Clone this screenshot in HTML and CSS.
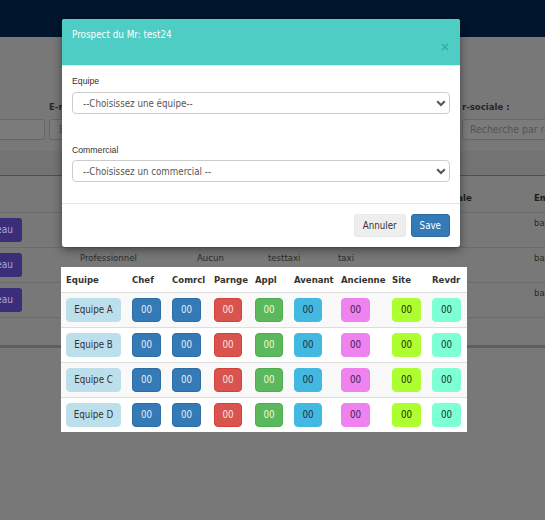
FILE: index.html
```html
<!DOCTYPE html>
<html lang="fr">
<head>
<meta charset="utf-8">
<title>Prospect</title>
<link rel="stylesheet" href="styles.css">
</head>
<body>
<div class="navbar"></div>
<main class="page">
  <div class="filters">
    <div class="filter f1"><div class="finput"></div></div>
    <div class="filter f2"><span class="flabel">E-mail :</span><div class="finput">E-mail</div></div>
    <div class="filter f3"><span class="flabel">r-sociale :</span><div class="finput">Recherche par r-sociale</div></div>
  </div>
  <div class="band"></div>
  <div class="bgtable">
    <div class="bgrow head">
      <span></span><span>Type</span><span>Statut</span><span>Nom</span><span>Prénom</span><span>Raison sociale</span><span>Email</span>
    </div>
    <div class="bgrow">
      <span class="btncell"><span class="pbtn">Tableau</span></span><span>Professionnel</span><span>Aucun</span><span>testtaxi</span><span>taxi</span><span></span><span>bac@test.fr</span>
    </div>
    <div class="bgrow">
      <span class="btncell"><span class="pbtn">Tableau</span></span><span>Professionnel</span><span>Aucun</span><span>testtaxi</span><span>taxi</span><span></span><span>bac@test.fr</span>
    </div>
    <div class="bgrow">
      <span class="btncell"><span class="pbtn">Tableau</span></span><span>Professionnel</span><span>Aucun</span><span>testtaxi</span><span>taxi</span><span></span><span>bac@test.fr</span>
    </div>
    <div class="bgrow foot"></div>
  </div>
</main>

<div class="modal">
  <div class="modal-header">
    <span class="modal-title">Prospect du Mr: test24</span>
    <svg class="close" width="8" height="8" viewBox="0 0 8 8"><path d="M1 1L7 7M7 1L1 7" stroke="#3ea79f" stroke-width="1.4" fill="none"/></svg>
  </div>
  <div class="modal-body">
    <div class="group">
      <div class="label">Equipe</div>
      <div class="select"><span>--Choisissez une équipe--</span><svg width="10" height="7" viewBox="0 0 10 7"><path d="M1.2 1.3L5 5L8.8 1.3" stroke="#555" stroke-width="2" fill="none"/></svg></div>
    </div>
    <div class="group g2">
      <div class="label">Commercial</div>
      <div class="select"><span>--Choisissez un commercial --</span><svg width="10" height="7" viewBox="0 0 10 7"><path d="M1.2 1.3L5 5L8.8 1.3" stroke="#555" stroke-width="2" fill="none"/></svg></div>
    </div>
  </div>
  <div class="modal-footer">
    <span class="btn btn-default">Annuler</span>
    <span class="btn btn-primary">Save</span>
  </div>
</div>

<div class="teams">
  <table>
    <colgroup>
      <col class="w66"><col class="w40"><col class="w42"><col class="w41"><col class="w39"><col class="w47"><col class="w51"><col class="w40"><col class="w40">
    </colgroup>
    <thead>
      <tr><th>Equipe</th><th>Chef</th><th>Comrcl</th><th>Parnge</th><th>Appl</th><th>Avenant</th><th>Ancienne</th><th>Site</th><th>Revdr</th></tr>
    </thead>
    <tbody>
      <tr><td><span class="b team">Equipe A</span></td><td><span class="b pri">00</span></td><td><span class="b pri">00</span></td><td><span class="b dan">00</span></td><td><span class="b suc">00</span></td><td><span class="b inf">00</span></td><td><span class="b vio">00</span></td><td><span class="b gy">00</span></td><td><span class="b aq">00</span></td></tr>
      <tr><td><span class="b team">Equipe B</span></td><td><span class="b pri">00</span></td><td><span class="b pri">00</span></td><td><span class="b dan">00</span></td><td><span class="b suc">00</span></td><td><span class="b inf">00</span></td><td><span class="b vio">00</span></td><td><span class="b gy">00</span></td><td><span class="b aq">00</span></td></tr>
      <tr><td><span class="b team">Equipe C</span></td><td><span class="b pri">00</span></td><td><span class="b pri">00</span></td><td><span class="b dan">00</span></td><td><span class="b suc">00</span></td><td><span class="b inf">00</span></td><td><span class="b vio">00</span></td><td><span class="b gy">00</span></td><td><span class="b aq">00</span></td></tr>
      <tr><td><span class="b team">Equipe D</span></td><td><span class="b pri">00</span></td><td><span class="b pri">00</span></td><td><span class="b dan">00</span></td><td><span class="b suc">00</span></td><td><span class="b inf">00</span></td><td><span class="b vio">00</span></td><td><span class="b gy">00</span></td><td><span class="b aq">00</span></td></tr>
    </tbody>
  </table>
</div>
</body>
</html>
```
FILE: styles.css
```css
* { box-sizing: border-box; }
html, body { margin: 0; padding: 0; }
body {
  width: 545px;
  height: 520px;
  overflow: hidden;
  position: relative;
  background: #787878;
  font-family: "DejaVu Sans Condensed", "DejaVu Sans", sans-serif;
  font-size: 9.5px;
  color: #222;
}
.navbar { height: 37px; background: #01162c; }

/* background page (dimmed by backdrop) */
.filters {
  display: flex;
  align-items: flex-end;
  width: 620px;
  padding-top: 63px;
}
.filter { display: flex; flex-direction: column; }
.flabel {
  line-height: 14px;
  height: 14px;
  margin-bottom: 5px;
  font-weight: bold;
  color: #262626;
  white-space: nowrap;
}
.finput {
  height: 21px;
  background: #7b7b7b;
  border: 1px solid #676767;
  border-radius: 3px;
  color: #545454;
  font-size: 10.4px;
  line-height: 19px;
  padding-left: 7px;
  white-space: nowrap;
  overflow: hidden;
}
.f1 { width: 45px; }
.f1 .finput { border-left: none; border-radius: 0 3px 3px 0; }
.f2 { width: 120px; margin-left: 4px; }
.f2 .finput { padding-left: 9px; }
.f3 { width: 158px; margin-left: auto; }
.band {
  margin-top: 11px;
  height: 25px;
  background: #737373;
  border-bottom: 1px solid #505050;
}
.bgtable { border-bottom: 3px solid #5e5e5e; }
.bgrow {
  display: grid;
  grid-template-columns: 80px 117px 71px 70px 65px 131px 1fr;
  height: 35px;
  border-top: 1px solid #6b6b6b;
  padding-top: 3px;
  line-height: 14px;
  color: #2a2a2a;
  white-space: nowrap;
}
.bgrow.head {
  height: 36px;
  border-top: none;
  padding-top: 15px;
  font-weight: bold;
  color: #202020;
}
.bgrow.foot { height: 28px; }
.btncell { display: flex; justify-content: flex-end; width: 22px; padding-top: 2px; }
.pbtn {
  flex-shrink: 0;
  height: 24px;
  line-height: 24px;
  padding: 0 9px;
  background: #3b2e79;
  color: #aca5d6;
  border-radius: 3px;
  font-size: 10px;
}

/* modal */
.modal {
  position: absolute;
  left: 62px;
  top: 19px;
  width: 398px;
  background: #fff;
  border-radius: 3px;
  overflow: hidden;
  box-shadow: 0 3px 10px rgba(0, 0, 0, 0.45);
}
.modal-header {
  height: 47px;
  background: #4ecdc4;
  border-bottom: 1px solid #e8e8e8;
  display: flex;
  justify-content: space-between;
  padding: 9px 10px 0 10px;
}
.modal-title { color: #fff; font-size: 9.8px; line-height: 14px; }
.close { align-self: flex-end; margin-bottom: 14px; margin-right: 1px; }
.modal-body { padding: 8px 10px 21px 10px; }
.label {
  font-family: "Liberation Sans", Arial, sans-serif;
  font-size: 8.7px;
  line-height: 14px;
  color: #333;
  margin-bottom: 4px;
}
.g2 { margin-top: 29px; }
.g2 .label { margin-bottom: 3px; }
.select {
  height: 22px;
  border: 1px solid #cccccc;
  border-radius: 4px;
  display: flex;
  align-items: center;
  justify-content: space-between;
  padding: 0 3px 0 10px;
  color: #555;
  font-size: 9.7px;
}
.modal-footer {
  border-top: 1px solid #e5e5e5;
  padding: 10px;
  display: flex;
  justify-content: flex-end;
  gap: 5px;
}
.btn {
  height: 23px;
  line-height: 21px;
  padding: 0 8px;
  border-radius: 3px;
  font-size: 9.7px;
  border: 1px solid transparent;
}
.btn-default { background: #eeeeee; border-color: #e8e8e8; color: #333; }
.btn-primary { background: #337ab7; border-color: #2e6da4; color: #fff; }

/* teams table */
.teams {
  position: absolute;
  left: 61px;
  top: 267px;
  width: 406px;
  background: #fff;
}
.teams table { width: 406px; border-collapse: collapse; table-layout: fixed; }
.w66 { width: 66px; } .w40 { width: 40px; } .w42 { width: 42px; } .w41 { width: 41px; }
.w39 { width: 39px; } .w47 { width: 47px; } .w51 { width: 51px; }
.teams th {
  height: 25px;
  padding: 0 0 0 5px;
  text-align: left;
  font-weight: bold;
  color: #333;
  border-bottom: 1px solid #dddddd;
  white-space: nowrap;
}
.teams td { padding: 5px 0 5px 5px; border-top: 1px solid #dddddd; height: 35px; }
.teams tbody tr:nth-child(odd) { background: #f9f9f9; }
.b {
  display: block;
  width: 29px;
  height: 24px;
  line-height: 22px;
  border: 1px solid transparent;
  border-radius: 4px;
  text-align: center;
  font-size: 9.7px;
  color: #333;
}
.team { width: 55px; background: #bcdfeb; border-color: #bcdfeb; color: #333; }
.pri { background: #337ab7; border-color: #2e6da4; color: #e8eef6; }
.dan { width: 28px; background: #d9534f; border-color: #d43f3a; color: #fbe6e6; }
.suc { width: 28px; background: #5cb85c; border-color: #4cae4c; color: #eef8d8; }
.inf { width: 28px; background: #43b8e0; border-color: #43b8e0; color: #1b3040; }
.vio { background: #ee82ee; border-color: #ee82ee; color: #3a1f50; }
.gy { background: #adff2f; border-color: #adff2f; color: #1d2a05; }
.aq { background: #7fffd4; border-color: #7fffd4; color: #14302a; }
```
